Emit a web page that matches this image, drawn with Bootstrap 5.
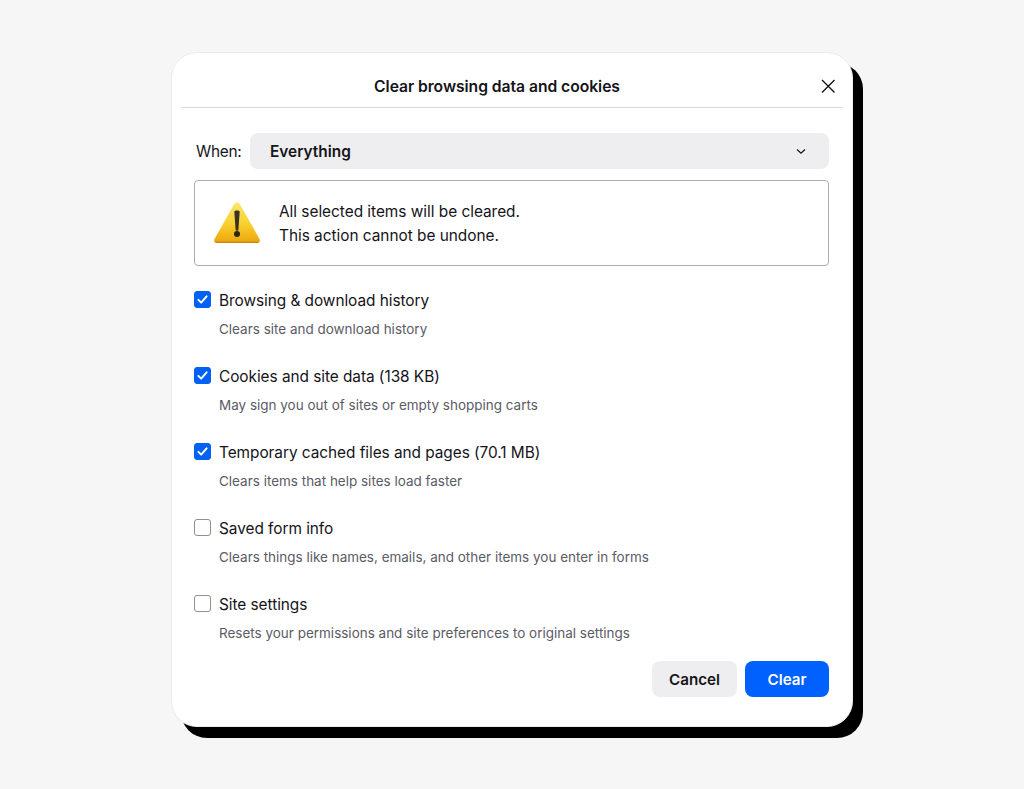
<!doctype html>
<html lang="en">
<head>
<meta charset="utf-8">
<title>Clear browsing data and cookies</title>
<link href="https://cdn.jsdelivr.net/npm/bootstrap@5.3.0/dist/css/bootstrap.min.css" rel="stylesheet">
<style>
html,body{height:100%;}
body{background:#f6f6f6;font-family:Inter,"Liberation Sans",sans-serif;color:#15141a;overflow:hidden;}
.dlg-wrap{padding:52px 171px 0 171px;}
.dlg{height:675px;border:1px solid #ececee;border-radius:26px;box-shadow:10px 11px 0 #000;background:#fff;padding:0 9px;}
.dlg-head{height:55px;border-bottom:1px solid #d9d9dc;padding-top:13px;}
.dlg-title{font-size:15.7px;font-weight:600;line-height:20px;letter-spacing:-.05px;padding-right:30px;}
.dlg-x{right:7.500px;top:25px;width:16px;height:16px;background:none;border:0;padding:0;line-height:0;}
.dlg-body{padding:25px 14px 0 13px;}
.when-label{font-size:15.4px;line-height:20px;width:56px;padding:2px 0 0 2px;color:#15141a;letter-spacing:-.25px;}
.when-select{height:36px;background:#eeeef0;border-radius:8px;padding:0 22px 0 20px;font-size:15.4px;font-weight:600;}
.when-value{padding-top:2px;}
.notice{height:86px;margin-top:11px;border:1px solid #adadb0;border-radius:4px;padding-left:18px;font-size:15.4px;line-height:24px;letter-spacing:-.02px;}
.notice-icon{width:48px;height:46px;margin-right:18px;}
.notice-text{padding-top:1px;}
.opts{padding-top:24px;}
.opt{height:76.1px;}
.opt .form-check-input{width:17px;height:17px;margin:-1px 8px 1px 0;border-color:#8f8f93;border-radius:3px;flex:none;}
.opt .form-check-input:checked{background-color:#0061f2;border-color:#0061f2;background-image:url("data:image/svg+xml,%3csvg xmlns='http://www.w3.org/2000/svg' viewBox='0 0 20 20'%3e%3cpath fill='none' stroke='%23fff' stroke-linecap='round' stroke-linejoin='round' stroke-width='2.600' d='M4.500 10.500l3.700 3.700 7.300-8.400'/%3e%3c/svg%3e");}
.opt-row{height:20px;}
.opt-label{font-size:15.4px;line-height:20px;letter-spacing:-.05px;margin-top:2px;}
.opt-desc{font-size:13.46px;line-height:18px;color:#5b5b66;margin-top:10px;padding-left:25px;letter-spacing:.01px;}
.actions{margin-top:-9px;}
.act{height:36px;border-radius:8px;font-size:15.2px;font-weight:600;padding:1px 0 0;line-height:35px;border:0;}
.act-cancel{width:85px;background:#eeeef0;color:#15141a;}
.act-clear{width:84px;background:#0061ff;color:#fff;}
.act-cancel:hover{background:#e2e2e6;color:#15141a;}
.act-clear:hover{background:#0053db;color:#fff;}
</style>
</head>
<body>
<div class="dlg-wrap">
  <div class="dlg">
    <div class="dlg-head position-relative d-flex align-items-center justify-content-center">
      <div class="dlg-title">Clear browsing data and cookies</div>
      <button class="dlg-x position-absolute" type="button" aria-label="Close">
        <svg width="16" height="16" viewBox="0 0 16 16"><path d="M2 2l12.500 12.500M14.500 2L2 14.500" stroke="#15141a" stroke-width="1.400" fill="none"/></svg>
      </button>
    </div>
    <div class="dlg-body">
      <div class="d-flex align-items-center">
        <div class="when-label">When:</div>
        <div class="when-select flex-grow-1 d-flex align-items-center justify-content-between">
          <span class="when-value">Everything</span>
          <svg width="12" height="12" viewBox="0 0 12 12"><path d="M2 4.500L6 8.200 10 4.500" stroke="#15141a" stroke-width="1.200" fill="none"/></svg>
        </div>
      </div>
      <div class="notice d-flex align-items-center">
        <svg class="notice-icon" viewBox="0 0 48 46">
          <defs>
            <linearGradient id="tri" x1="0" y1="0" x2="0" y2="1">
              <stop offset="0" stop-color="#fbe66d"/>
              <stop offset=".55" stop-color="#f8cf2c"/>
              <stop offset="1" stop-color="#eda40c"/>
            </linearGradient>
          </defs>
          <path d="M24 2.500c1.500 0 2.500 1 3.200 2.300L46.500 39c1 2 0 4-2.200 4H3.700c-2.200 0-3.200-2-2.200-4L20.800 4.800C21.500 3.500 22.500 2.500 24 2.500z" fill="url(#tri)"/>
          <path d="M2 41.500c.5 1 1 1.500 1.700 1.500h40.600c.7 0 1.200-.5 1.700-1.500z" fill="#c98a12"/>
          <path d="M21.300 11.500c0-1.500 5.400-1.500 5.400 0l-1.300 18.500c0 1-2.800 1-2.800 0z" fill="#3a3222"/>
          <circle cx="24" cy="34" r="3" fill="#2c2618"/>
        </svg>
        <div class="notice-text">All selected items will be cleared.<br>This action cannot be undone.</div>
      </div>
      <div class="opts">
        <div class="opt">
          <div class="opt-row d-flex align-items-center"><input class="form-check-input" type="checkbox" id="o1" checked><label class="opt-label" for="o1">Browsing &amp; download history</label></div>
          <div class="opt-desc">Clears site and download history</div>
        </div>
        <div class="opt">
          <div class="opt-row d-flex align-items-center"><input class="form-check-input" type="checkbox" id="o2" checked><label class="opt-label" for="o2">Cookies and site data (138 KB)</label></div>
          <div class="opt-desc">May sign you out of sites or empty shopping carts</div>
        </div>
        <div class="opt">
          <div class="opt-row d-flex align-items-center"><input class="form-check-input" type="checkbox" id="o3" checked><label class="opt-label" for="o3">Temporary cached files and pages (70.1 MB)</label></div>
          <div class="opt-desc">Clears items that help sites load faster</div>
        </div>
        <div class="opt">
          <div class="opt-row d-flex align-items-center"><input class="form-check-input" type="checkbox" id="o4"><label class="opt-label" for="o4">Saved form info</label></div>
          <div class="opt-desc">Clears things like names, emails, and other items you enter in forms</div>
        </div>
        <div class="opt">
          <div class="opt-row d-flex align-items-center"><input class="form-check-input" type="checkbox" id="o5"><label class="opt-label" for="o5">Site settings</label></div>
          <div class="opt-desc">Resets your permissions and site preferences to original settings</div>
        </div>
      </div>
      <div class="actions d-flex justify-content-end gap-2">
        <button type="button" class="btn act act-cancel">Cancel</button>
        <button type="button" class="btn act act-clear">Clear</button>
      </div>
    </div>
  </div>
</div>
<script src="https://cdn.jsdelivr.net/npm/bootstrap@5.3.0/dist/js/bootstrap.bundle.min.js"></script>
</body>
</html>
